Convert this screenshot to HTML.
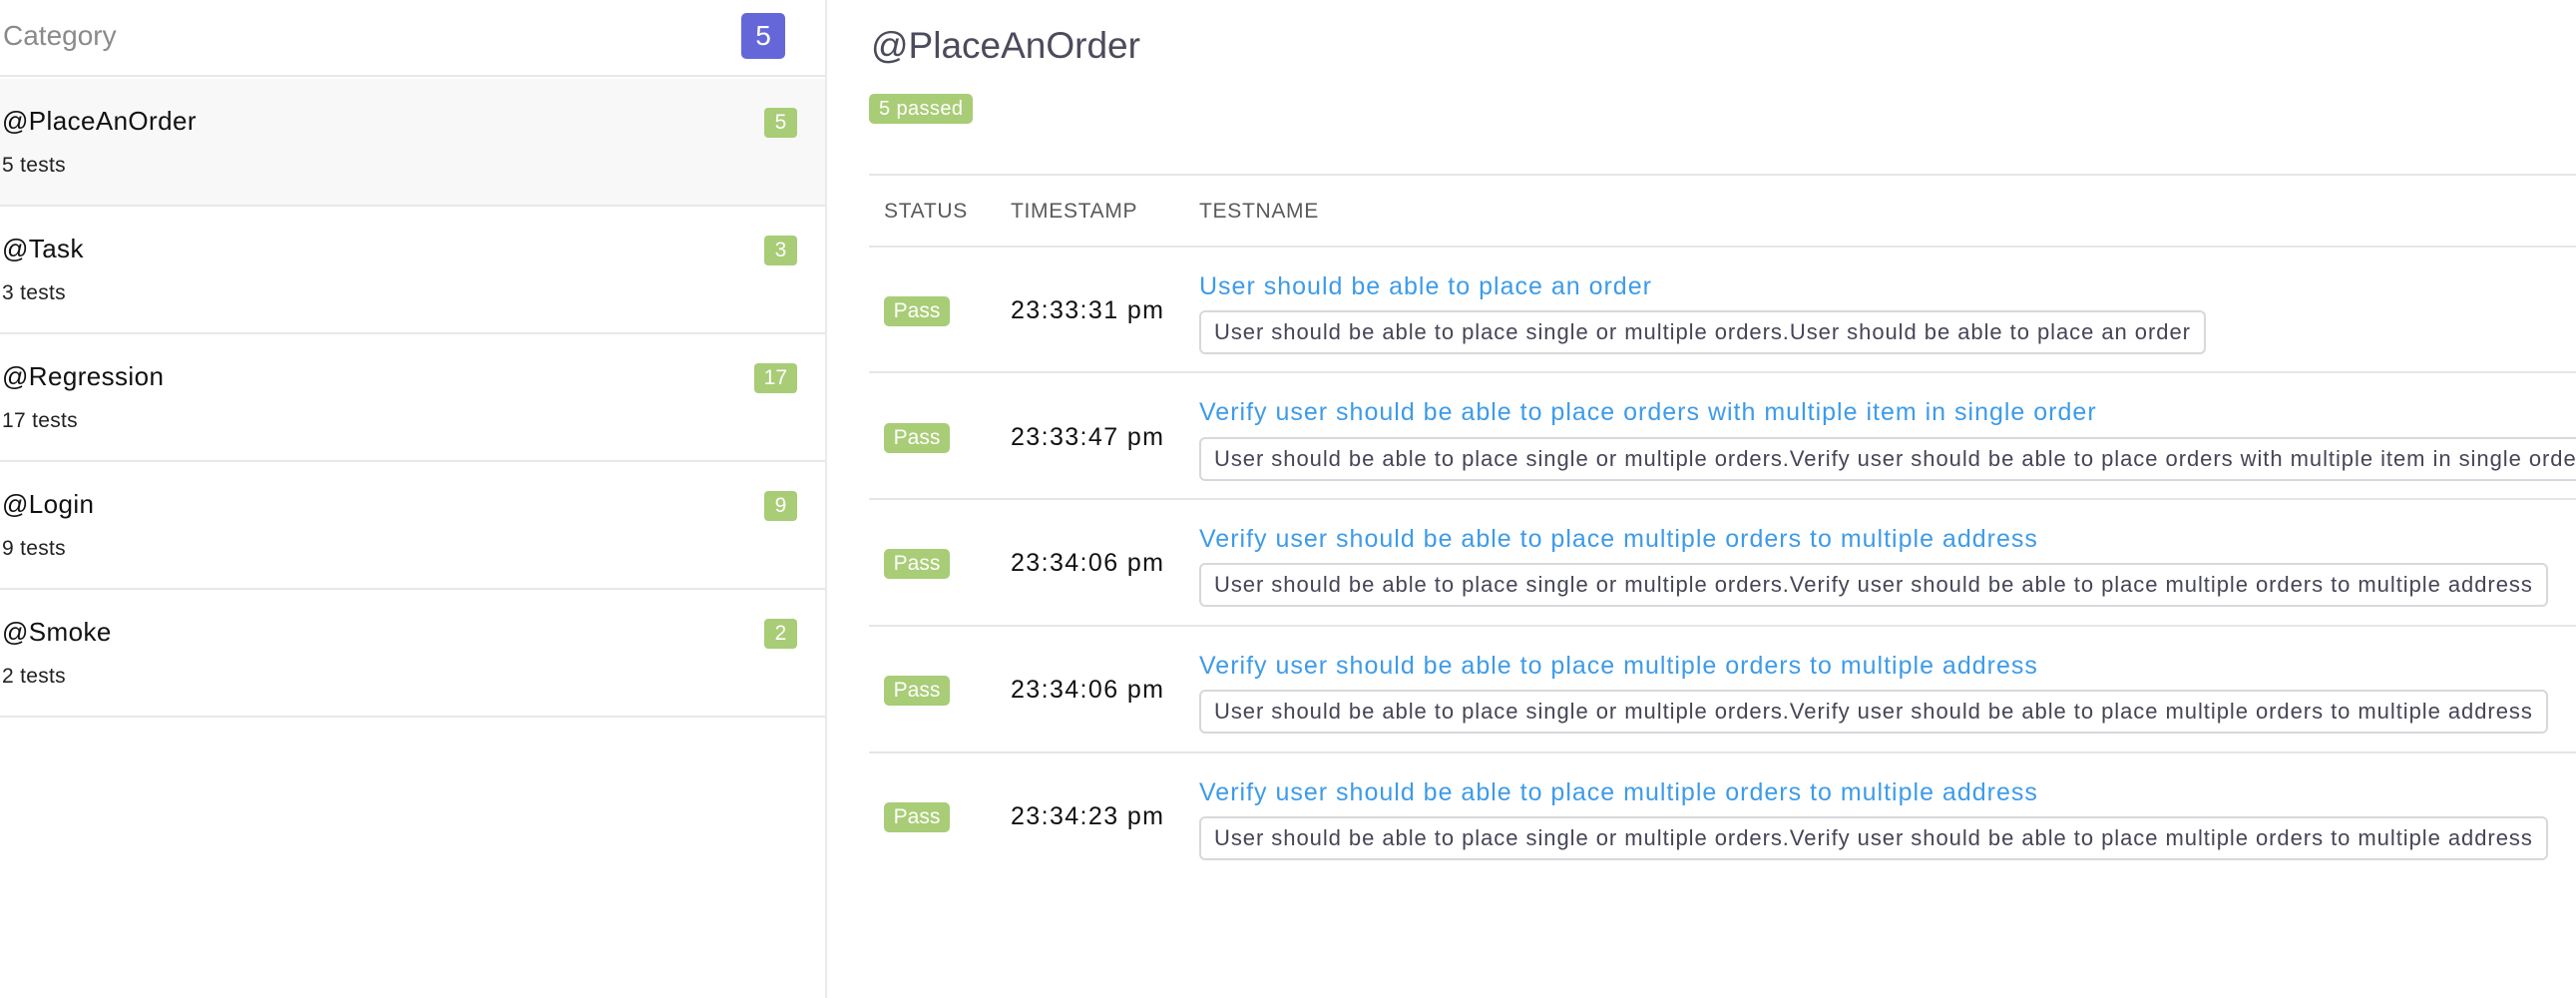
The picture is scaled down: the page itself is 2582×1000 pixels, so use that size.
<!DOCTYPE html>
<html><head><meta charset="utf-8"><style>
*{margin:0;padding:0;box-sizing:border-box}
html,body{width:2582px;height:1000px;overflow:hidden;background:#fff;font-family:"Liberation Sans",Arial,sans-serif}
.side{position:absolute;left:0;top:0;width:829px;height:1000px;border-right:2px solid #ebebeb}
.hdr{position:absolute;left:0;top:0;width:827px;height:77px;border-bottom:2px solid #e8e8e8}
.hdr span{position:absolute;left:3px;top:20px;font-size:28px;color:#8a8a8a}
.hdr b{position:absolute;left:743px;top:13px;width:44px;height:46px;background:#6567d9;color:#fff;font-weight:normal;font-size:28px;text-align:center;line-height:46px;border-radius:5px}
.cat{position:absolute;left:0;width:827px;height:128px;border-bottom:2px solid #e8e8e8}
.cat .t{position:absolute;left:2px;top:27px;font-size:26px;color:#111;letter-spacing:.4px}
.cat .s{position:absolute;left:2px;top:75px;font-size:21px;color:#222;letter-spacing:.3px}
.cat b{position:absolute;right:28px;top:29px;height:30px;min-width:33px;padding:0 7px;background:#a8cd76;color:#fff;font-weight:normal;font-size:21px;line-height:30px;text-align:center;border-radius:4px}
.cat b.w{padding:0 10px}
.main{position:absolute;left:831px;top:0;right:0;height:1000px}
h1{position:absolute;left:42px;top:25px;font-size:37px;font-weight:normal;color:#4b4b5c}
.pb{position:absolute;left:40px;top:94px;height:30px;padding:0 10px;background:#a8cd76;color:#fff;font-size:20px;line-height:30px;border-radius:5px;letter-spacing:.4px}
.tl{position:absolute;left:40px;right:0;height:2px;background:#e6e6e6}
.th{position:absolute;top:200px;font-size:21px;color:#5a5a5a;letter-spacing:.7px}
.pass{position:absolute;left:55px;width:66px;height:30px;background:#a8cd76;color:#fff;font-size:21px;line-height:30px;text-align:center;border-radius:5px}
.ts{position:absolute;left:182px;font-size:25px;color:#111;letter-spacing:1.4px}
.ln{position:absolute;left:371px;font-size:25px;color:#3d9be9;white-space:nowrap;letter-spacing:1px}
.bx{position:absolute;left:371px;height:44px;padding:0 13px;border:2px solid #d8d8dc;border-radius:6px;font-size:22px;line-height:40px;color:#454556;white-space:nowrap;letter-spacing:.95px}
</style></head><body>
<div class="side">
<div class="hdr"><span>Category</span><b>5</b></div>
<div class="cat" style="top:79px;background:#f8f8f8"><div class="t">@PlaceAnOrder</div><div class="s">5 tests</div><b>5</b></div>
<div class="cat" style="top:207px"><div class="t">@Task</div><div class="s">3 tests</div><b>3</b></div>
<div class="cat" style="top:335px"><div class="t">@Regression</div><div class="s">17 tests</div><b class="w">17</b></div>
<div class="cat" style="top:463px"><div class="t">@Login</div><div class="s">9 tests</div><b>9</b></div>
<div class="cat" style="top:591px"><div class="t">@Smoke</div><div class="s">2 tests</div><b>2</b></div>
</div>
<div class="main">
<h1>@PlaceAnOrder</h1>
<div class="pb">5 passed</div>
<div class="tl" style="top:174px"></div>
<div class="th" style="left:55px">STATUS</div>
<div class="th" style="left:182px">TIMESTAMP</div>
<div class="th" style="left:371px">TESTNAME</div>
<div class="tl" style="top:246px"></div>

<div class="pass" style="top:297px">Pass</div>
<div class="ts" style="top:297px">23:33:31 pm</div>
<div class="ln" style="top:273px">User should be able to place an order</div>
<div class="bx" style="top:311px">User should be able to place single or multiple orders.User should be able to place an order</div>
<div class="tl" style="top:372px"></div>

<div class="pass" style="top:424px">Pass</div>
<div class="ts" style="top:424px">23:33:47 pm</div>
<div class="ln" style="top:399px">Verify user should be able to place orders with multiple item in single order</div>
<div class="bx" style="top:438px">User should be able to place single or multiple orders.Verify user should be able to place orders with multiple item in single order</div>
<div class="tl" style="top:499px"></div>

<div class="pass" style="top:550px">Pass</div>
<div class="ts" style="top:550px">23:34:06 pm</div>
<div class="ln" style="top:526px">Verify user should be able to place multiple orders to multiple address</div>
<div class="bx" style="top:564px">User should be able to place single or multiple orders.Verify user should be able to place multiple orders to multiple address</div>
<div class="tl" style="top:626px"></div>

<div class="pass" style="top:677px">Pass</div>
<div class="ts" style="top:677px">23:34:06 pm</div>
<div class="ln" style="top:653px">Verify user should be able to place multiple orders to multiple address</div>
<div class="bx" style="top:691px">User should be able to place single or multiple orders.Verify user should be able to place multiple orders to multiple address</div>
<div class="tl" style="top:753px"></div>

<div class="pass" style="top:804px">Pass</div>
<div class="ts" style="top:804px">23:34:23 pm</div>
<div class="ln" style="top:780px">Verify user should be able to place multiple orders to multiple address</div>
<div class="bx" style="top:818px">User should be able to place single or multiple orders.Verify user should be able to place multiple orders to multiple address</div>
</div>
</body></html>
